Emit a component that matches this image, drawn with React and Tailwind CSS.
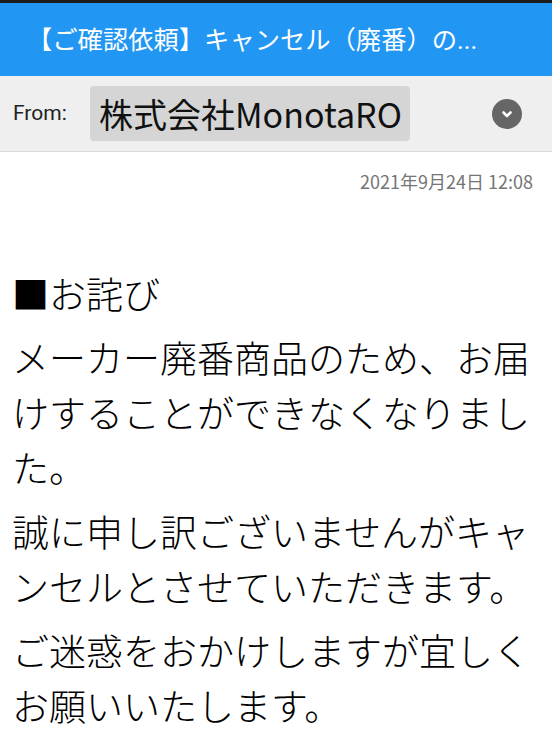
export default function App() {
  const jp = { fontFamily: '"Noto Sans CJK JP", "Noto Sans", sans-serif' };
  const title = { fontFamily: 'Roboto, "Noto Sans CJK JP", sans-serif' };
  return (
    <div className="w-[552px] h-[750px] bg-white overflow-hidden" style={jp}>
      <div className="h-[3px] bg-[#1c1c1c]" />
      <div className="h-[73px] bg-[#2196f3] flex items-center pl-[27px]">
        <div className="text-white text-[25.3px] leading-none whitespace-nowrap" style={title}>
          <span style={jp}>【ご確認依頼】キャンセル（廃番）の</span>...
        </div>
      </div>
      <div className="h-[76px] bg-[#efefef] border-b border-[#dadada] flex items-center pl-[13px] pr-[30px]">
        <div className="text-[21px] text-[#222] w-[77px]" style={{ fontFamily: 'Roboto, "Noto Sans CJK JP", sans-serif' }}>From:</div>
        <div className="h-[55px] bg-[#d5d5d5] rounded-[4px] flex items-center pl-[9px] pr-[8px]">
          <span className="text-[34px] leading-none text-[#111]">株式会社MonotaRO</span>
        </div>
        <div className="flex-1" />
        <div className="w-[30px] h-[30px] rounded-full bg-[#666666] flex items-center justify-center">
          <svg width="14" height="14" viewBox="0 0 14 14">
            <path d="M3.5 5.5 L7 9 L10.5 5.5" fill="none" stroke="white" strokeWidth="2.6" strokeLinecap="round" strokeLinejoin="round" />
          </svg>
        </div>
      </div>
      <div className="px-3">
        <div className="pt-[17px] pr-[7px] text-right text-[18px] leading-[24px] text-[#757575]">2021年9月24日 12:08</div>
        <div className="mt-[73px] text-[37px] leading-[55px] text-black font-light flex flex-col gap-[9px]">
          <p>■お詫び</p>
          <p>メーカー廃番商品のため、お届けすることができなくなりました。</p>
          <p>誠に申し訳ございませんがキャンセルとさせていただきます。</p>
          <p>ご迷惑をおかけしますが宜しくお願いいたします。</p>
        </div>
      </div>
    </div>
  );
}
